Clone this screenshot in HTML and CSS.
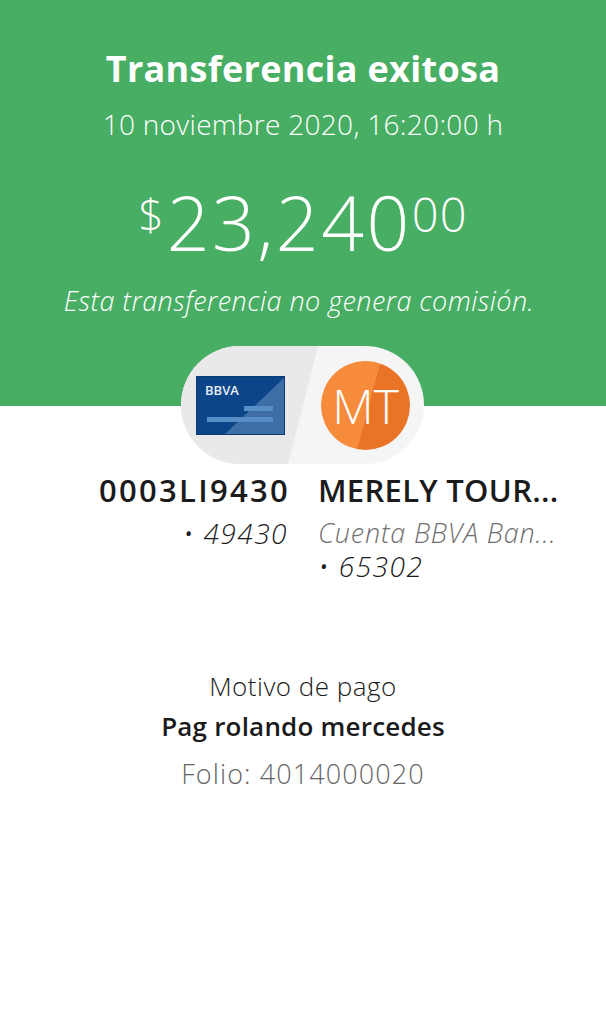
FILE: index.html
```html
<!DOCTYPE html>
<html lang="es">
<head>
    <meta charset="UTF-8">
    <meta name="viewport" content="width=device-width, initial-scale=1.0">
    <title>Transferencia exitosa</title>
    <link rel="stylesheet" href="styles.css">
</head>
<body>

    <!-- encabezado verde -->
    <div class="header">
        <h1 class="title">Transferencia exitosa</h1>
        <p class="date">10 noviembre 2020, 16:20:00 h</p>
        <p class="amount"><span class="amount-sign">$</span>23,240<span class="amount-cents">00</span></p>
        <p class="note">Esta transferencia no genera comisión.</p>
    </div>

    <!-- tarjeta y destinatario -->
    <div class="pill">
        <svg class="pill-bg" width="243" height="118" viewBox="0 0 243 118">
            <rect width="243" height="118" rx="59" fill="#f5f5f5"/>
            <path d="M59 0H137L107 118H59A59 59 0 0 1 59 0Z" fill="#e9e9ea"/>
        </svg>
        <svg class="card" width="89" height="59" viewBox="0 0 89 59">
            <rect x="0.5" y="0.5" width="88" height="58" fill="#0d4688" stroke="#0a3b72"/>
            <path d="M29 58L88 2V58Z" fill="#3d6ea6"/>
            <rect x="48" y="30" width="29" height="5" fill="#568dc6"/>
            <rect x="11" y="41" width="66" height="5" fill="#568dc6"/>
            <text class="card-logo" x="9" y="19">BBVA</text>
        </svg>
        <div class="avatar">MT</div>
    </div>

    <div class="accounts">
        <div class="account account-from">
            <div class="account-name account-id">0003LI9430</div>
            <div class="account-line">• 49430</div>
        </div>
        <div class="account">
            <div class="account-name">MERELY TOUR...</div>
            <div class="account-bank">Cuenta BBVA Ban...</div>
            <div class="account-line">• 65302</div>
        </div>
    </div>

    <!-- motivo -->
    <div class="details">
        <div class="reason-label">Motivo de pago</div>
        <div class="reason">Pag rolando mercedes</div>
        <div class="folio">Folio: 4014000020</div>
    </div>

</body>
</html>
```

FILE: styles.css
```css
body {
    margin: 0;
    background-color: white;
    color: #1b1b1b;
    font-family: "Open Sans", "Liberation Sans", sans-serif;
    text-align: center;
}

p, h1 {
    margin: 0;
}

.header {
    box-sizing: border-box;
    height: 406px;
    padding-top: 45px;
    background-color: #48ae64;
    color: white;
}

.title {
    font-size: 36px;
    line-height: 48px;
    font-weight: 700;
    letter-spacing: 0.3px;
}

.date {
    margin-top: 11px;
    font-size: 28px;
    line-height: 40px;
    font-weight: 300;
    letter-spacing: 0.3px;
}

.amount {
    margin-top: 33px;
    font-size: 75px;
    line-height: 90px;
    font-weight: 300;
    letter-spacing: 2.5px;
}

.amount-sign {
    font-size: 44px;
    vertical-align: 20px;
    line-height: 0;
    letter-spacing: 3px;
}

.amount-cents {
    font-size: 47px;
    vertical-align: 19px;
    line-height: 0;
    letter-spacing: 1px;
}

.note {
    margin-top: 16px;
    padding-right: 8px;
    font-size: 27px;
    line-height: 36px;
    font-weight: 300;
    font-style: italic;
    letter-spacing: 0.45px;
}

.pill {
    position: relative;
    display: flex;
    align-items: center;
    box-sizing: border-box;
    width: 243px;
    height: 118px;
    margin: -60px auto 0 181px;
    padding-left: 15px;
}

.pill-bg {
    position: absolute;
    left: 0;
    top: 0;
}

.card {
    position: relative;
    display: block;
}

.card-logo {
    font-size: 13px;
    font-weight: 600;
    fill: #e6eef7;
}

.avatar {
    position: relative;
    width: 89px;
    height: 89px;
    margin-left: 36px;
    border-radius: 50%;
    background: linear-gradient(105deg, #f58b3b 0 53%, #ea7426 53%);
    color: white;
    font-size: 48px;
    font-weight: 300;
    line-height: 89px;
}

.accounts {
    display: grid;
    grid-template-columns: 288px 270px;
    column-gap: 30px;
    margin-top: 5px;
    text-align: left;
}

.account-from {
    text-align: right;
}

.account-name {
    font-size: 31px;
    line-height: 42px;
    font-weight: 600;
    letter-spacing: 0.3px;
    white-space: nowrap;
}

.account-id {
    letter-spacing: 2.3px;
    margin-right: -2px;
}

.account-bank {
    margin-top: 5px;
    color: #6f6f6f;
    font-size: 27px;
    line-height: 34px;
    font-weight: 300;
    font-style: italic;
    letter-spacing: 0.8px;
    white-space: nowrap;
}

.account-line {
    font-size: 28px;
    line-height: 33px;
    font-weight: 300;
    font-style: italic;
    letter-spacing: 1.5px;
}

.account-from .account-line {
    margin-top: 6px;
}

.details {
    margin-top: 84px;
}

.reason-label {
    font-size: 26px;
    line-height: 38px;
    font-weight: 300;
    letter-spacing: 0.5px;
}

.reason {
    margin-top: 1px;
    font-size: 26px;
    line-height: 40px;
    font-weight: 600;
    letter-spacing: 0.2px;
}

.folio {
    margin-top: 8px;
    color: #666666;
    font-size: 27px;
    line-height: 40px;
    font-weight: 300;
    letter-spacing: 1.1px;
}
```
